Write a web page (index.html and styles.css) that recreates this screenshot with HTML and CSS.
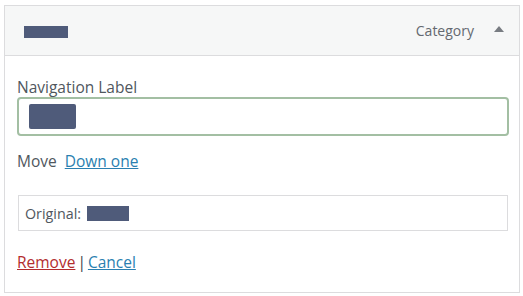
FILE: index.html
```html
<!DOCTYPE html>
<html lang="en">
<head>
<meta charset="utf-8">
<title>Menu item</title>
<link rel="stylesheet" href="styles.css">
</head>
<body>
<div class="item">
  <div class="item-bar">
    <span class="redact redact-title"></span>
    <span class="item-type">Category</span>
    <span class="toggle" aria-label="Collapse"></span>
  </div>
  <div class="item-settings">
    <label class="field-label" for="nav-label">Navigation Label</label>
    <div class="text-input" id="nav-label"><span class="redact redact-input"></span></div>
    <div class="move-row">
      <span class="move-text">Move</span>
      <a class="link" href="#">Down one</a>
    </div>
    <div class="original">
      <span>Original:</span>
      <span class="redact redact-original"></span>
    </div>
    <div class="actions">
      <a class="link link-delete" href="#">Remove</a>
      <span class="sep">|</span>
      <a class="link" href="#">Cancel</a>
    </div>
  </div>
</div>
</body>
</html>
```
FILE: styles.css
```css
html, body {
  margin: 0;
  padding: 0;
  background: #ffffff;
}
body {
  font-family: "Open Sans", "Noto Sans", "Liberation Sans", sans-serif;
  font-size: 15.5px;
  color: #50575e;
  padding: 5px 3px 0 4px;
}
.item {
  width: 516px;
  box-sizing: border-box;
  border: 1px solid #dcdcde;
  background: #fff;
}
.item-bar {
  height: 50px;
  box-sizing: border-box;
  background: #f6f7f7;
  border-bottom: 1px solid #dcdcde;
  display: flex;
  align-items: center;
  padding: 0 15px 0 19px;
}
.redact {
  display: inline-block;
  background: #4f5b7a;
}
.redact-title {
  width: 44px;
  height: 12px;
  margin-top: 2px;
}
.item-type {
  margin-left: auto;
  color: #646970;
  font-size: 14px;
}
.toggle {
  width: 0;
  height: 0;
  border-left: 5px solid transparent;
  border-right: 5px solid transparent;
  border-bottom: 6px solid #787c82;
  margin-left: 20px;
  margin-bottom: 4px;
}
.item-settings {
  display: flex;
  flex-direction: column;
  align-items: flex-start;
  padding: 20px 10px 20px 12px;
}
.field-label {
  line-height: 20px;
  color: #50575e;
  margin-top: 1px;
}
.text-input {
  width: 492px;
  height: 39px;
  box-sizing: border-box;
  border: 2px solid #a3bfa3;
  border-radius: 4px;
  display: flex;
  align-items: center;
  padding-left: 10px;
}
.redact-input {
  width: 47px;
  height: 25px;
  border-radius: 2px;
}
.move-row {
  margin-top: 15px;
  line-height: 20px;
  display: flex;
  gap: 8px;
}
.link {
  color: #2a7fb0;
  text-decoration: underline;
}
.link-delete {
  color: #b32d2e;
}
.original {
  width: 490px;
  height: 36px;
  box-sizing: border-box;
  border: 1px solid #dcdcde;
  margin-top: 24px;
  margin-left: 1px;
  display: flex;
  align-items: center;
  padding-left: 6px;
  gap: 6px;
  font-size: 14.3px;
}
.redact-original {
  width: 42px;
  height: 15px;
}
.actions {
  margin-top: 21px;
  line-height: 20px;
  display: flex;
  gap: 2px;
}
.sep {
  color: #3c434a;
}
```
